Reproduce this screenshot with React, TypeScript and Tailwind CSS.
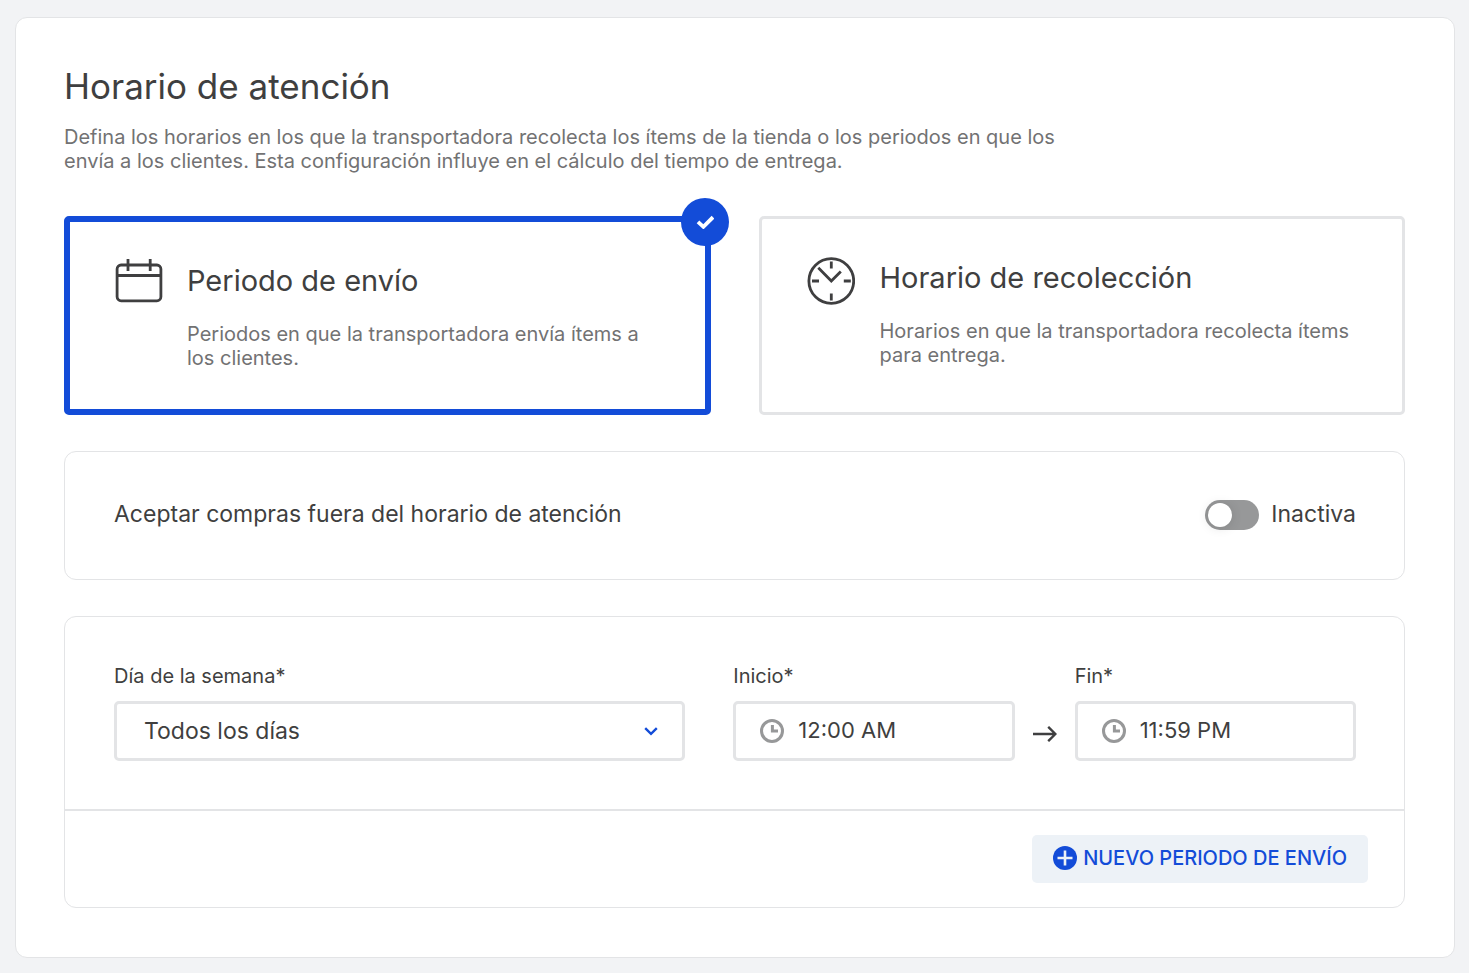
import { useId, useState, type ReactNode } from "react";

function CalendarIcon() {
  return (
    <svg width="48" height="50" viewBox="0 0 48 50" fill="none" stroke="#3f3f40" strokeWidth="2.8" className="shrink-0" aria-hidden="true">
      <rect x="2.1" y="7" width="43.8" height="35.8" rx="4" />
      <path d="M2.1 17.5H45.9M13 1V13M35.2 1V13" />
    </svg>
  );
}

function DialIcon() {
  return (
    <svg width="48" height="50" viewBox="0 0 48 50" fill="none" stroke="#3f3f40" strokeWidth="2.8" className="shrink-0" aria-hidden="true">
      <circle cx="24.3" cy="26" r="22.4" />
      <path d="M24.3 6.5V13.5M24.3 38.5V45.5M5 26H12M36.8 26H43.8" />
      <path d="M11.3 12.8L24.3 26L33.8 16.5" />
    </svg>
  );
}

function ClockIcon() {
  return (
    <svg width="24" height="24" viewBox="0 0 24 24" fill="none" stroke="#979899" strokeWidth="3" aria-hidden="true">
      <circle cx="12" cy="12" r="10.5" />
      <path d="M12.4 6V12H18" />
    </svg>
  );
}

type OptionProps = {
  icon: ReactNode;
  title: string;
  text: string;
  checked: boolean;
  onSelect: () => void;
};

function OptionCard({ icon, title, text, checked, onSelect }: OptionProps) {
  return (
    <label
      className={
        checked
          ? "relative flex cursor-pointer gap-6 rounded-[5px] border-6 border-[#134cd8] px-[45px] pt-9 pb-[39px]"
          : "relative flex cursor-pointer gap-[25px] rounded-[5px] border-3 border-[#e3e4e6] px-[45px] pt-9 pb-[39px]"
      }
    >
      <input type="radio" name="schedule" className="sr-only" checked={checked} onChange={onSelect} />
      {icon}
      <span className="block pt-[5px]">
        <span className="block text-[29px] leading-9 text-[#3f3f40]">{title}</span>
        <span className="mt-[23px] block text-[20px] leading-6 text-[#727273]">{text}</span>
      </span>
      {checked && (
        <span className="absolute -top-6 -right-6 flex size-12 items-center justify-center rounded-full bg-[#134cd8]">
          <svg width="18" height="14" viewBox="0 0 18 14" fill="none" stroke="#fff" strokeWidth="3.8" aria-hidden="true">
            <path d="M2 6.8L7.4 11.8L17 2.2" />
          </svg>
        </span>
      )}
    </label>
  );
}

function TimeField({ label, initial }: { label: string; initial: string }) {
  const id = useId();
  const [value, setValue] = useState(initial);
  return (
    <div className="min-w-0 flex-1">
      <label htmlFor={id} className="mb-[13px] block text-[20px] leading-6 text-[#3f3f40]">
        {label}
      </label>
      <div className="flex h-15 items-center gap-3.5 rounded-[5px] border-3 border-[#e3e4e6] pl-6">
        <ClockIcon />
        <input
          id={id}
          value={value}
          onChange={(e) => setValue(e.target.value)}
          className="min-w-0 flex-1 pb-0.5 text-[22px] leading-7 text-[#3f3f40] outline-none"
        />
      </div>
    </div>
  );
}

export default function App() {
  const [mode, setMode] = useState("shipping");
  const [active, setActive] = useState(false);
  return (
    <main className="min-h-screen bg-[#f2f3f5] pt-[17px] pr-3.5 pb-[15px] pl-[15px] font-['Inter',sans-serif] text-[#3f3f40]">
      <section className="rounded-xl border border-[#e3e4e6] bg-white pt-12 pr-[49px] pb-[49px] pl-12">
        <h1 className="text-[35px] leading-10">Horario de atención</h1>
        <p className="mt-[19px] max-w-[1020px] text-[20px] leading-6 text-[#727273]">
          Defina los horarios en los que la transportadora recolecta los ítems de la tienda o los periodos en que los
          envía a los clientes. Esta configuración influye en el cálculo del tiempo de entrega.
        </p>

        <div className="mt-[43px] grid grid-cols-2 gap-12">
          <OptionCard
            icon={<CalendarIcon />}
            title="Periodo de envío"
            text="Periodos en que la transportadora envía ítems a los clientes."
            checked={mode === "shipping"}
            onSelect={() => setMode("shipping")}
          />
          <OptionCard
            icon={<DialIcon />}
            title="Horario de recolección"
            text="Horarios en que la transportadora recolecta ítems para entrega."
            checked={mode === "pickup"}
            onSelect={() => setMode("pickup")}
          />
        </div>

        <div className="mt-9 flex items-center justify-between rounded-xl border border-[#e3e4e6] pt-12 pr-12 pb-[49px] pl-[49px]">
          <label htmlFor="accept" className="pb-0.5 text-[23px] leading-7">
            Aceptar compras fuera del horario de atención
          </label>
          <div className="flex items-center gap-3">
            <input
              id="accept"
              type="checkbox"
              role="switch"
              checked={active}
              onChange={() => setActive(!active)}
              className="h-[30px] w-[54px] appearance-none rounded-full bg-[#979899] p-[3px] before:block before:size-6 before:rounded-full before:bg-white before:shadow-[0_1px_12px_rgba(0,0,0,0.12)] checked:bg-[#134cd8] checked:before:ml-6"
            />
            <span className="pb-0.5 text-[23px] leading-7">{active ? "Activa" : "Inactiva"}</span>
          </div>
        </div>

        <div className="mt-9 rounded-xl border border-[#e3e4e6]">
          <div className="flex gap-12 pt-[47px] pr-12 pb-12 pl-[49px]">
            <div className="w-[46%] shrink-0">
              <label htmlFor="day" className="mb-[13px] block text-[20px] leading-6">
                Día de la semana*
              </label>
              <div className="relative">
                <select
                  id="day"
                  className="h-15 w-full appearance-none rounded-[5px] border-3 border-[#e3e4e6] bg-white px-[27px] text-[23px] leading-7 outline-none"
                >
                  <option>Todos los días</option>
                  <option>Lunes a viernes</option>
                  <option>Sábado y domingo</option>
                </select>
                <svg
                  width="14"
                  height="9"
                  viewBox="0 0 14 9"
                  fill="none"
                  stroke="#134cd8"
                  strokeWidth="2.4"
                  className="pointer-events-none absolute top-[26px] right-[27px]"
                  aria-hidden="true"
                >
                  <path d="M1.2 1.2L7 6.8L12.8 1.2" />
                </svg>
              </div>
            </div>
            <div className="flex min-w-0 flex-1 items-end">
              <TimeField label="Inicio*" initial="12:00 AM" />
              <div className="flex h-[54px] w-15 shrink-0 items-center justify-center">
                <svg width="24" height="16" viewBox="0 0 24 16" fill="none" stroke="#3f3f40" strokeWidth="2.4" aria-hidden="true">
                  <path d="M0 8H22.5M15.2 0.8L22.4 8L15.2 15.2" />
                </svg>
              </div>
              <TimeField label="Fin*" initial="11:59 PM" />
            </div>
          </div>
          <div className="flex justify-end border-t-2 border-[#e3e4e6] px-9 py-6">
            <button
              type="button"
              className="flex h-12 items-center gap-1.5 rounded-[5px] bg-[#edf2f7] px-[21px] pb-0.5 text-[20px] leading-6 font-medium text-[#134cd8]"
            >
              <svg width="24" height="24" viewBox="0 0 24 24" aria-hidden="true">
                <circle cx="12" cy="12" r="12" fill="#134cd8" />
                <path d="M12 4.5V19.5M4.5 12H19.5" stroke="#edf2f7" strokeWidth="2.6" />
              </svg>
              NUEVO PERIODO DE ENVÍO
            </button>
          </div>
        </div>
      </section>
    </main>
  );
}
